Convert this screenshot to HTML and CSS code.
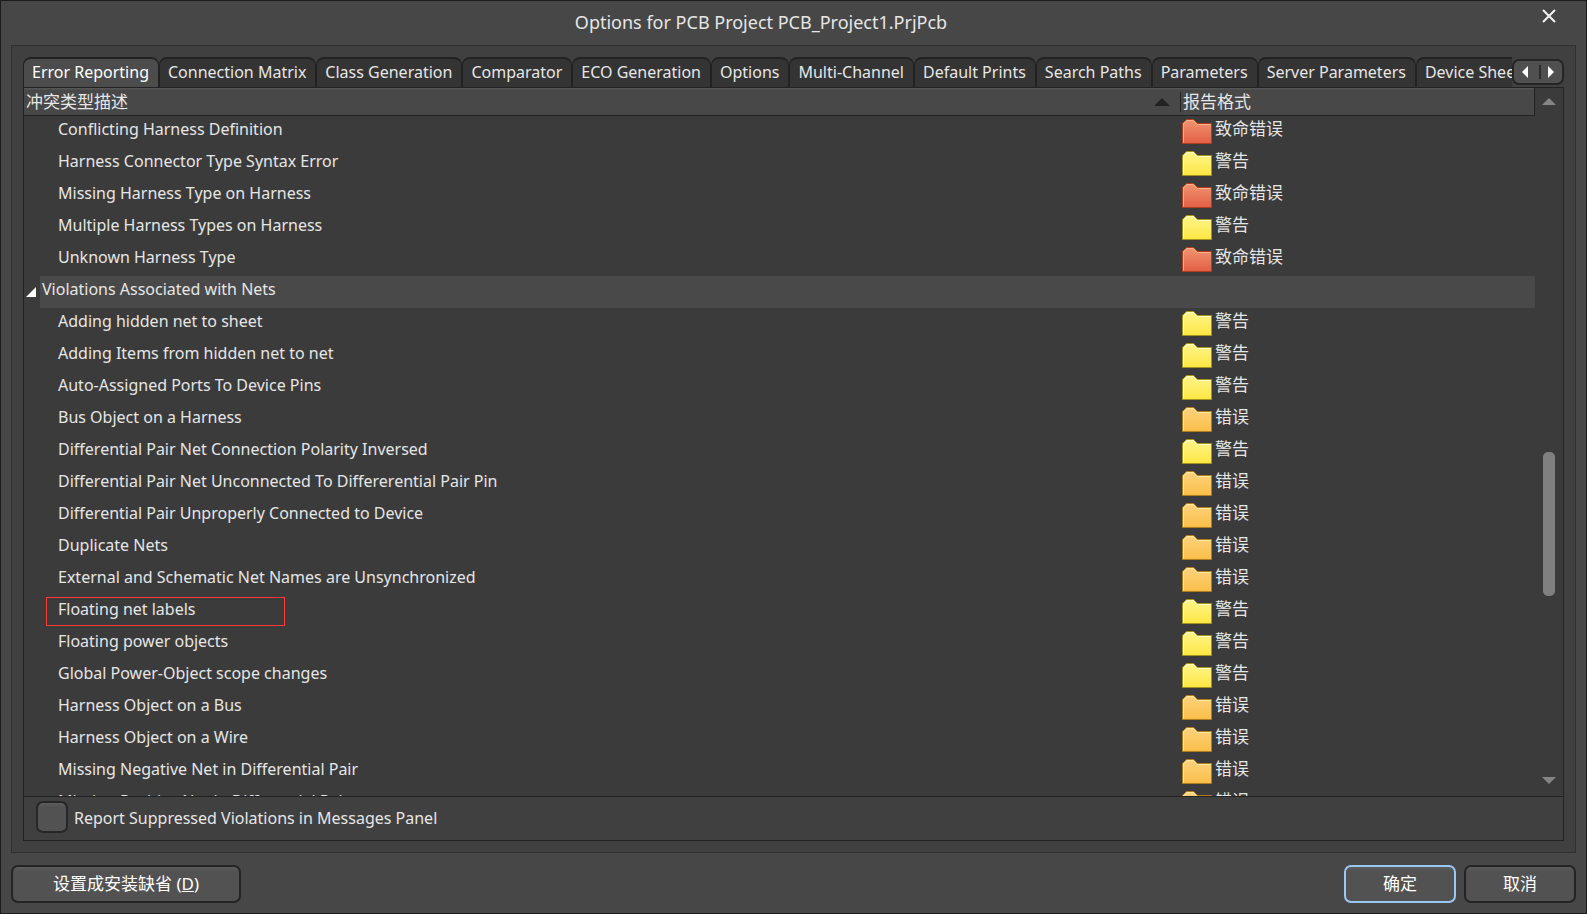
FILE: index.html
```
<!DOCTYPE html>
<html lang="zh-CN">
<head>
<meta charset="utf-8">
<title>Options for PCB Project PCB_Project1.PrjPcb</title>
<link rel="stylesheet" href="styles.css">
</head>
<body>
<svg class="defs" aria-hidden="true">
  <defs>
    <linearGradient id="grad-fatal" x1="0" y1="0" x2="0" y2="1"><stop offset="0" stop-color="#ef9570"/><stop offset="1" stop-color="#e26045"/></linearGradient>
    <linearGradient id="grad-warning" x1="0" y1="0" x2="0" y2="1"><stop offset="0" stop-color="#fef48a"/><stop offset="1" stop-color="#fde744"/></linearGradient>
    <linearGradient id="grad-error" x1="0" y1="0" x2="0" y2="1"><stop offset="0" stop-color="#fdd47c"/><stop offset="1" stop-color="#fabd4a"/></linearGradient>
    <symbol id="folder" viewBox="0 0 30 25">
      <path class="folder-body" d="M.5 24.500V4.500L4.500.500H11.500L15.500 4.500H29.500V24.500Z"/>
      <path class="folder-shine" d="M1.500 23.500V4.900L4.900 1.500H11.100L15.100 5.500H28.500"/>
    </symbol>
  </defs>
</svg>
<div class="window">
  <header class="titlebar">
    <h1 class="title">Options for PCB Project PCB_Project1.PrjPcb</h1>
    <button class="close" type="button" aria-label="Close"><svg width="14" height="14" viewBox="0 0 14 14"><path d="M1 1L13 13M13 1L1 13" stroke="#f2f2f2" stroke-width="2" fill="none"/></svg></button>
  </header>
  <main class="panel">
    <div class="tabstrip">
      <div class="tabs" role="tablist">
        <button class="tab active" type="button" role="tab" aria-selected="true">Error Reporting</button>
        <button class="tab" type="button" role="tab">Connection Matrix</button>
        <button class="tab" type="button" role="tab">Class Generation</button>
        <button class="tab" type="button" role="tab">Comparator</button>
        <button class="tab" type="button" role="tab">ECO Generation</button>
        <button class="tab" type="button" role="tab">Options</button>
        <button class="tab" type="button" role="tab">Multi-Channel</button>
        <button class="tab" type="button" role="tab">Default Prints</button>
        <button class="tab" type="button" role="tab">Search Paths</button>
        <button class="tab" type="button" role="tab">Parameters</button>
        <button class="tab" type="button" role="tab">Server Parameters</button>
        <button class="tab" type="button" role="tab">Device Sheets</button>
      </div>
      <div class="tabnav">
        <button type="button" aria-label="Previous tabs"><svg width="6" height="12" viewBox="0 0 6 12"><path d="M6 0V12L0 6Z" fill="#fff"/></svg></button>
        <button type="button" aria-label="Next tabs"><svg width="6" height="12" viewBox="0 0 6 12"><path d="M0 0V12L6 6Z" fill="#fff"/></svg></button>
      </div>
    </div>
    <div class="sheet">
      <div class="list">
        <div class="viewport">
          <table class="grid">
            <colgroup><col><col class="col-mode"></colgroup>
            <thead>
              <tr>
                <th scope="col"><div class="head"><span>冲突类型描述</span><svg width="16" height="8" viewBox="0 0 16 8"><path d="M0 8L8 0L16 8Z" fill="#222"/></svg></div></th>
                <th scope="col"><div class="head mode-head">报告格式</div></th>
              </tr>
            </thead>
            <tbody id="rows"></tbody>
          </table>
        </div>
        <div class="scrollbar" aria-hidden="true">
          <svg width="14" height="7" viewBox="0 0 14 7"><path d="M0 7L7 0L14 7Z" fill="#858585"/></svg>
          <div class="track"><div class="thumb"></div></div>
          <svg width="14" height="7" viewBox="0 0 14 7"><path d="M0 0L7 7L14 0Z" fill="#858585"/></svg>
        </div>
      </div>
      <div class="options">
        <input class="check" type="checkbox" id="suppressed">
        <label for="suppressed">Report Suppressed Violations in Messages Panel</label>
      </div>
    </div>
  </main>
  <footer class="footer">
    <button class="btn wide" type="button">设置成安装缺省 (<u>D</u>)</button>
    <span class="spacer"></span>
    <button class="btn primary" type="button">确定</button>
    <button class="btn" type="button">取消</button>
  </footer>
</div>
<script src="rows.js"></script>
</body>
</html>
```
FILE: rows.js
```
const labels = { fatal: "致命错误", warning: "警告", error: "错误" };
const rows = [
  ["Conflicting Harness Definition", "fatal"],
  ["Harness Connector Type Syntax Error", "warning"],
  ["Missing Harness Type on Harness", "fatal"],
  ["Multiple Harness Types on Harness", "warning"],
  ["Unknown Harness Type", "fatal"],
  ["Violations Associated with Nets", null],
  ["Adding hidden net to sheet", "warning"],
  ["Adding Items from hidden net to net", "warning"],
  ["Auto-Assigned Ports To Device Pins", "warning"],
  ["Bus Object on a Harness", "error"],
  ["Differential Pair Net Connection Polarity Inversed", "warning"],
  ["Differential Pair Net Unconnected To Differerential Pair Pin", "error"],
  ["Differential Pair Unproperly Connected to Device", "error"],
  ["Duplicate Nets", "error"],
  ["External and Schematic Net Names are Unsynchronized", "error"],
  ["Floating net labels", "warning", true],
  ["Floating power objects", "warning"],
  ["Global Power-Object scope changes", "warning"],
  ["Harness Object on a Bus", "error"],
  ["Harness Object on a Wire", "error"],
  ["Missing Negative Net in Differential Pair", "error"],
  ["Missing Positive Net in Differential Pair", "error"]
];
document.getElementById("rows").innerHTML = rows.map(([name, mode, marked]) => {
  if (!mode) {
    return `<tr class="group"><th scope="rowgroup" colspan="2"><div class="group-line"><span class="expander"><svg width="10" height="10" viewBox="0 0 10 10"><path d="M10 0V10H0Z" fill="#fff"/></svg></span><span class="group-name">${name}</span></div></th></tr>`;
  }
  const mark = marked ? '<span class="marker"></span>' : "";
  return `<tr><td class="name">${mark}${name}</td><td><div class="mode ${mode}"><svg class="folder" width="30" height="25"><use href="#folder"/></svg><span>${labels[mode]}</span></div></td></tr>`;
}).join("");
```
FILE: styles.css
```
* { box-sizing: border-box; }
body {
  margin: 0;
  color: #e6e6e6;
  font: 16px/24px "Noto Sans", "Noto Sans CJK SC", sans-serif;
}
button { font: inherit; color: inherit; padding: 0; border: 0; background: none; }
svg { display: block; flex: none; }
.defs { position: absolute; width: 0; height: 0; }

.window {
  display: flex;
  flex-direction: column;
  height: 100vh;
  border: 1px solid #1b1b1b;
  background: #474747;
}
.titlebar { display: flex; flex: none; height: 44px; }
.title {
  flex: 1;
  margin: 0;
  font-size: 18px;
  font-weight: 400;
  line-height: 42px;
  text-align: center;
}
.close {
  display: flex;
  align-items: center;
  justify-content: center;
  width: 56px;
  height: 30px;
  margin-right: 9px;
}

.panel {
  display: flex;
  flex: 1;
  flex-direction: column;
  min-height: 0;
  margin: 0 10px;
  padding: 11px;
  border: 1px solid #303030;
  background: #404040;
}
.tabstrip { display: flex; flex: none; height: 30px; }
.tabs { display: flex; flex: 1; min-width: 0; overflow: hidden; }
.tab {
  flex: none;
  height: 30px;
  padding: 0 9px 2px 8px;
  border: 1px solid #222;
  border-width: 2px 1px 0;
  border-radius: 8px 8px 0 0;
  background: #343434;
  white-space: nowrap;
}
.tab.active { background: #4c4c4c; color: #fff; }
.tabnav {
  display: flex;
  width: 52px;
  height: 26px;
  margin-top: 2px;
  border: 2px solid #252525;
  border-radius: 7px;
  background: #505050;
}
.tabnav button { display: flex; flex: 1; align-items: center; justify-content: center; margin: 4px 0; }
.tabnav button:first-child { padding-right: 3px; }
.tabnav button + button { border-left: 2px solid #2a2a2a; }

.sheet {
  display: flex;
  flex: 1;
  flex-direction: column;
  min-height: 0;
  border: 1px solid #222;
}
.list { display: flex; flex: 1; min-height: 0; background: #3b3b3b; }
.viewport { flex: 1; min-width: 0; overflow: hidden; }
.grid { width: 100%; border-collapse: separate; border-spacing: 0; table-layout: fixed; }
.col-mode { width: 355px; }
.grid th { padding: 0; font-weight: 400; text-align: left; }
thead th {
  height: 28px;
  border-bottom: 1px solid #222;
  background: linear-gradient(#555 1px, #484848 2px);
}
thead th:last-child { border-right: 1px solid #222; }
.head {
  display: flex;
  align-items: center;
  justify-content: space-between;
  height: 20px;
  padding: 0 10px 0 2px;
  font-size: 17px;
}
.mode-head { border-left: 1px solid #222; }
tbody tr { height: 32px; line-height: 26px; }
tbody td { height: 32px; padding: 0; vertical-align: top; }
.name { position: relative; padding-left: 34px; white-space: nowrap; }
.marker {
  position: absolute;
  top: 1px;
  left: 22px;
  width: 239px;
  height: 29px;
  border: 1px solid #ff3838;
}
.group-line { display: flex; height: 32px; }
.expander { width: 16px; padding: 11px 0 0 2px; }
.group-name { flex: 1; padding-left: 2px; background: #494949; }
.mode { display: flex; gap: 3px; height: 32px; padding-left: 2px; font-size: 17px; }
.folder { margin-top: 3px; }
.folder-body { fill: var(--fill); stroke: var(--edge); }
.folder-shine { fill: none; stroke: var(--shine); }
.fatal { --fill: url(#grad-fatal); --edge: #b23c1c; --shine: #f5b08f; }
.warning { --fill: url(#grad-warning); --edge: #a3931c; --shine: #fffbd0; }
.error { --fill: url(#grad-error); --edge: #b07c20; --shine: #ffe7a8; }

.scrollbar {
  display: flex;
  flex-direction: column;
  align-items: center;
  width: 28px;
  padding: 10px 0 12px;
}
.track { display: flex; flex: 1; flex-direction: column; padding-top: 347px; }
.thumb { width: 12px; height: 144px; border-radius: 5px; background: #808080; }

.options {
  display: flex;
  flex: none;
  align-items: center;
  gap: 6px;
  height: 44px;
  padding: 0 12px 3px;
  border-top: 1px solid #222;
}
.options label { padding-top: 2px; }
.check {
  appearance: none;
  width: 32px;
  height: 32px;
  margin: 0;
  border: 2px solid #262626;
  border-radius: 7px;
  background: linear-gradient(#5c5c5c, #525252 4px);
}

.footer { display: flex; flex: none; gap: 8px; padding: 12px 10px 10px; }
.spacer { flex: 1; }
.btn {
  width: 112px;
  height: 38px;
  border: 2px solid #242424;
  border-radius: 7px;
  background: linear-gradient(#5c5c5c, #525252 4px);
  color: #fff;
  font-size: 17px;
}
.btn.wide { width: 230px; }
.btn.primary { border-color: #98c8f5; }
```
